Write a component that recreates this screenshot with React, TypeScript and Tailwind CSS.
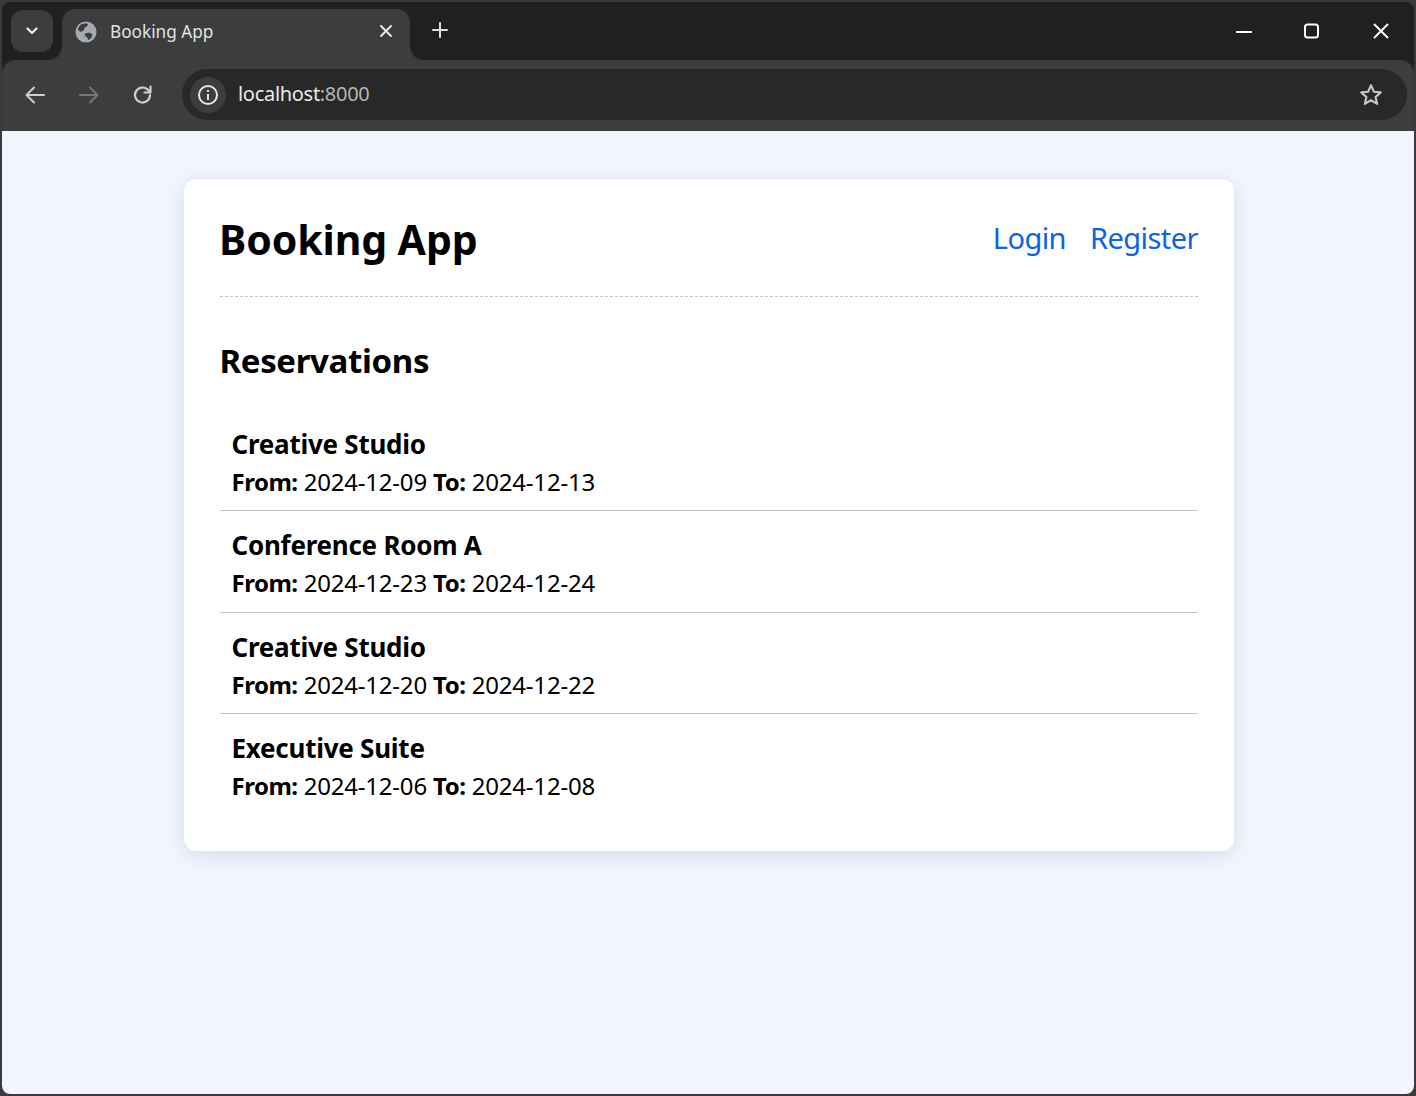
import React from "react";

const items = [
  ["Creative Studio", "2024-12-09", "2024-12-13"],
  ["Conference Room A", "2024-12-23", "2024-12-24"],
  ["Creative Studio", "2024-12-20", "2024-12-22"],
  ["Executive Suite", "2024-12-06", "2024-12-08"],
];

function Globe() {
  return (
    <svg width="22" height="22" viewBox="0 0 22 22">
      <circle cx="11" cy="11" r="10.5" fill="#a6abb2" />
      <path d="M6 3.5c2-1 5-1.400 7-.6l-1 2.600-2.500 1.200-.6 2.600L5.500 11 2.800 8.600C3.400 6.500 4.500 4.600 6 3.500Z" fill="#3d3d3d" />
      <path d="M10 12.500l4-1 3.500 1.800-1.200 3.600-3 2.400-1.200-3-2.400-1.200Z" fill="#3d3d3d" />
    </svg>
  );
}

export default function App() {
  return (
    <div className="h-[1096px] w-[1416px] overflow-hidden bg-[#3a3a3a] p-[2px] font-['Noto_Sans',sans-serif]">
      <div className="flex h-full flex-col overflow-hidden rounded-[8px] bg-[#202020]">
        {/* tab strip */}
        <div className="flex h-[58px] shrink-0 items-start pl-[9px]">
          <div className="mt-[8px] flex h-[42px] w-[42px] items-center justify-center rounded-[12px] bg-[#3d3d3d]">
            <svg width="14" height="10" viewBox="0 0 14 10" fill="none" stroke="#f0f0f0" strokeWidth="2.2" strokeLinecap="round" strokeLinejoin="round">
              <path d="M2.500 2.500 7 7l4.500-4.500" />
            </svg>
          </div>
          <div className="relative mt-[7px] ml-[9px] flex h-[51px] w-[348px] items-start rounded-t-[14px] bg-[#3d3d3d] pl-[13px] pr-[17px]">
            <svg className="absolute bottom-0 left-[-14px]" width="14" height="14" viewBox="0 0 14 14"><path d="M14 0v14H0A14 14 0 0 0 14 0Z" fill="#3d3d3d" /></svg>
            <svg className="absolute bottom-0 right-[-14px]" width="14" height="14" viewBox="0 0 14 14"><path d="M0 0v14h14A14 14 0 0 1 0 0Z" fill="#3d3d3d" /></svg>
            <div className="mt-[12px]"><Globe /></div>
            <span className="mt-[10px] ml-[13px] flex-1 text-[17.2px] leading-[26px] text-[#e2e2e2]">Booking App</span>
            <svg className="mt-[15px]" width="14" height="14" viewBox="0 0 14 14" stroke="#e8e8e8" strokeWidth="2" strokeLinecap="round">
              <path d="M2 2l10 10M12 2 2 12" />
            </svg>
          </div>
          <svg className="ml-[22px] mt-[20px]" width="16" height="16" viewBox="0 0 16 16" stroke="#e0e0e0" strokeWidth="2" strokeLinecap="round">
            <path d="M8 1v14M1 8h14" />
          </svg>
          <div className="ml-auto flex items-center pr-[24px] pt-[20px]">
            <svg width="16" height="16" viewBox="0 0 16 16" stroke="#fff" strokeWidth="2"><path d="M0 9h16" /></svg>
            <svg className="ml-[52px]" width="16" height="16" viewBox="0 0 16 16" fill="none" stroke="#fff" strokeWidth="2"><rect x="1" y="1.500" width="13" height="13" rx="2.500" /></svg>
            <svg className="ml-[52px]" width="18" height="18" viewBox="0 0 18 18" stroke="#fff" strokeWidth="2"><path d="M2 2l14 14M16 2 2 16" /></svg>
          </div>
        </div>
        {/* toolbar */}
        <div className="flex h-[71px] shrink-0 items-start rounded-t-[14px] bg-[#3d3d3d]">
          <svg className="ml-[22px] mt-[25px]" width="22" height="20" viewBox="0 0 22 20" fill="none" stroke="#cfcfcf" strokeWidth="2" strokeLinecap="round" strokeLinejoin="round">
            <path d="M20 10H3M10 2.500 2.500 10l7.500 7.500" />
          </svg>
          <svg className="ml-[32px] mt-[25px]" width="22" height="20" viewBox="0 0 22 20" fill="none" stroke="#777" strokeWidth="2" strokeLinecap="round" strokeLinejoin="round">
            <path d="M2 10h17M12 2.500 19.500 10 12 17.500" />
          </svg>
          <svg className="ml-[32px] mt-[24px]" width="22" height="22" viewBox="0 0 22 22" fill="none" stroke="#cfcfcf" strokeWidth="2.200" strokeLinecap="round" strokeLinejoin="round">
            <path d="M18 11a7.500 7.500 0 1 1-2.300-5.400L18 8" />
            <path d="M18.500 2.500V8.500H12.500" />
          </svg>
          <div className="ml-[28px] mt-[9px] flex h-[51px] w-[1225px] items-center rounded-full bg-[#282828] pl-[8px] pr-[23px]">
            <div className="flex h-[36px] w-[36px] items-center justify-center rounded-full bg-[#3d3d3d]">
              <svg width="22" height="22" viewBox="0 0 22 22" fill="none" stroke="#e6e6e6" strokeWidth="2">
                <circle cx="11" cy="11" r="9" />
                <path d="M11 10v6M11 6v2" />
              </svg>
            </div>
            <span className="ml-[12px] mt-[-1px] flex-1 text-[20px] leading-[28px] tracking-[-0.3px] text-[#b5b5b5]"><span className="text-[#eaeaea]">localhost</span>:8000</span>
            <svg width="26" height="26" viewBox="0 0 24 24" fill="none" stroke="#c4c4c4" strokeWidth="2" strokeLinejoin="round">
              <path d="m12 3 2.700 6 6.300.6-4.800 4.200 1.500 6.400-5.700-3.400-5.700 3.400 1.500-6.400L3 9.600 9.300 9Z" />
            </svg>
          </div>
        </div>
        {/* page */}
        <div className="flex-1 bg-[#f3f6fe] pt-[48px] pl-[182px]">
          <div className="w-[1050px] rounded-[12px] bg-white px-[36px] pt-[31px] pb-[35.2px] text-black shadow-[0_4px_20px_rgba(50,70,130,0.16)]">
            <header className="flex h-[87px] items-start justify-between border-b border-dashed border-[#c4c4c4]">
              <h1 className="ml-[-1px] text-[41px] leading-[59px] font-bold tracking-[-0.1px]">Booking App</h1>
              <nav className="mt-[8px] flex gap-[24px] text-[29px] leading-[40px] tracking-[-0.55px] text-[#0b63e5]">
                <a>Login</a>
                <a>Register</a>
              </nav>
            </header>
            <h2 className="ml-[-0.5px] mt-[39px] text-[33px] leading-[50px] font-bold tracking-[-0.35px]">Reservations</h2>
            <ul className="mt-[23.7px]">
              {items.map(([name, from, to], i) => (
                <li key={i} className={`h-[101.5px] pl-[11.5px] pt-[14px] ${i < 3 ? "border-b border-[#c4c4c4]" : ""}`}>
                  <div className="text-[26px] leading-[40px] font-bold tracking-[-0.25px]">{name}</div>
                  <div className="mt-[-1px] text-[24px] leading-[38px] tracking-[-0.2px]"><b className="tracking-[-0.5px]">From:</b> {from} <b className="tracking-[-0.4px]">To:</b> {to}</div>
                </li>
              ))}
            </ul>
          </div>
        </div>
      </div>
    </div>
  );
}
